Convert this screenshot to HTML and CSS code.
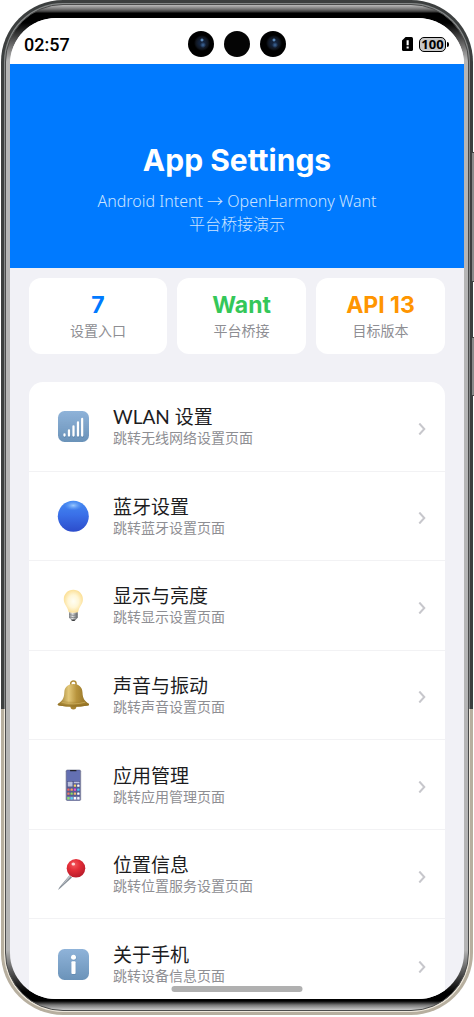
FILE: index.html
```html
<!DOCTYPE html>
<html lang="zh-CN">

<head>
	<meta charset="UTF-8">
	<meta name="viewport" content="width=device-width, initial-scale=1">
	<title>App Settings</title>
	<link rel="stylesheet" href="styles.css">
</head>

<body>
	<div class="phone">
		<span class="key key-volume"></span>
		<span class="key key-power"></span>
		<div class="rim">
			<div class="bezel">
				<div class="screen">
					<div class="statusbar">
						<span class="time">02:57</span>
						<div class="cameras">
							<span class="camera lens"></span>
							<span class="camera"></span>
							<span class="camera lens"></span>
						</div>
						<div class="indicators">
							<svg class="sim" viewBox="0 0 11 14" aria-hidden="true">
								<path d="M3.6 0H9.5Q11 0 11 1.500V12.500Q11 14 9.500 14H1.500Q0 14 0 12.500V3.600Z" />
								<path d="M4.600 3.200H6.700V8.300H4.600ZM4.600 9.500H6.700V11.400H4.600Z" fill="#fff" />
							</svg>
							<span class="battery">100</span>
						</div>
					</div>

					<header class="hero">
						<h1>App Settings</h1>
						<p>Android Intent → OpenHarmony Want<br>平台桥接演示</p>
					</header>

					<main>
						<section class="stats">
							<div class="stat">
								<strong class="blue">7</strong>
								<span>设置入口</span>
							</div>
							<div class="stat">
								<strong class="green">Want</strong>
								<span>平台桥接</span>
							</div>
							<div class="stat">
								<strong class="orange">API 13</strong>
								<span>目标版本</span>
							</div>
						</section>

						<nav class="menu">
							<a class="item" href="#wlan">
								<svg class="icon" viewBox="0 0 32 32" aria-hidden="true">
									<defs>
										<linearGradient id="tile" x1="0" y1="0" x2="0" y2="1">
											<stop offset="0" stop-color="#8fb3d9" />
											<stop offset="1" stop-color="#6b93b9" />
										</linearGradient>
									</defs>
									<rect x="1" y="1" width="31" height="31" rx="6.500" fill="url(#tile)" />
									<g stroke="#4f789f" stroke-width="2.600" stroke-linecap="round" opacity=".45" transform="translate(.3 .6)">
										<path d="M7.500 24.500V26M12 20.500V26M16.500 16.500V26M21 12.500V26M25.200 9V26" />
									</g>
									<g stroke="#fff" stroke-width="2.300" stroke-linecap="round">
										<path d="M7.500 24.500V25.600M12 20.500V25.600M16.500 16.500V25.600M21 12.500V25.600M25.200 9V25.600" />
									</g>
								</svg>
								<span class="text">
									<span class="name">WLAN 设置</span>
									<span class="desc">跳转无线网络设置页面</span>
								</span>
								<svg class="chevron" viewBox="0 0 8 12" aria-hidden="true"><path d="M1.300.5 6.300 6l-5 5.500" /></svg>
							</a>
							<a class="item" href="#bluetooth">
								<svg class="icon" viewBox="0 0 32 32" aria-hidden="true">
									<defs>
										<linearGradient id="ball" x1="0" y1="0" x2="0" y2="1">
											<stop offset="0" stop-color="#4489f2" />
											<stop offset=".45" stop-color="#3a70e8" />
											<stop offset="1" stop-color="#2c4ccb" />
										</linearGradient>
										<radialGradient id="shine">
											<stop offset="0" stop-color="#9ccaff" />
											<stop offset="1" stop-color="#60a0f8" stop-opacity="0" />
										</radialGradient>
									</defs>
									<circle cx="16.300" cy="16.300" r="15.500" fill="url(#ball)" />
									<ellipse cx="16.300" cy="5.500" rx="9" ry="5" fill="url(#shine)" />
								</svg>
								<span class="text">
									<span class="name">蓝牙设置</span>
									<span class="desc">跳转蓝牙设置页面</span>
								</span>
								<svg class="chevron" viewBox="0 0 8 12" aria-hidden="true"><path d="M1.300.5 6.300 6l-5 5.500" /></svg>
							</a>
							<a class="item" href="#display">
								<svg class="icon" viewBox="0 0 32 32" aria-hidden="true">
									<defs>
										<radialGradient id="glow" cx=".5" cy=".5" r=".55">
											<stop offset="0" stop-color="#fffef4" />
											<stop offset=".5" stop-color="#fff6d6" />
											<stop offset="1" stop-color="#fbdc8c" />
										</radialGradient>
										<linearGradient id="socket">
											<stop offset="0" stop-color="#85888a" />
											<stop offset=".4" stop-color="#e1e2e2" />
											<stop offset="1" stop-color="#5c5f61" />
										</linearGradient>
									</defs>
									<path d="M16.300.8C10.800.8 6.800 5 6.800 10.300c0 5 3.200 6.800 4.300 11 .4 1.700.7 2.400 1.500 2.400h7.500c.8 0 1.100-.7 1.500-2.400 1.100-4.200 4.300-6 4.300-11C25.900 5 21.800.8 16.300.8Z" fill="url(#glow)" />
									<path d="M12 23.200q4.400 1.500 8.700 0v5.600l-2.200 2.200q-.6 1-2.200 1t-2.100-1L12 28.800Z" fill="url(#socket)" />
									<path d="M12.200 25.700q4.200 1.300 8.300 0M12.200 28q4.200 1.300 8.300 0" fill="none" stroke="#707375" stroke-width=".7" />
									<path d="M14 30.400h4.600q-.6 1.600-2.300 1.600T14 30.400Z" fill="#37393b" />
								</svg>
								<span class="text">
									<span class="name">显示与亮度</span>
									<span class="desc">跳转显示设置页面</span>
								</span>
								<svg class="chevron" viewBox="0 0 8 12" aria-hidden="true"><path d="M1.300.5 6.300 6l-5 5.500" /></svg>
							</a>
							<a class="item" href="#sound">
								<svg class="icon" viewBox="0 0 32 32" aria-hidden="true">
									<defs>
										<linearGradient id="brass">
											<stop offset="0" stop-color="#8e6f24" />
											<stop offset=".35" stop-color="#e3c879" />
											<stop offset=".6" stop-color="#b8943d" />
											<stop offset="1" stop-color="#8a6a20" />
										</linearGradient>
										<linearGradient id="lip" x1="0" y1="0" x2="0" y2="1">
											<stop offset="0" stop-color="#b18c35" stop-opacity="0" />
											<stop offset="1" stop-color="#8a691c" />
										</linearGradient>
									</defs>
									<circle cx="16.400" cy="4.600" r="2.700" fill="none" stroke="#b28e3b" stroke-width="1.500" />
									<circle cx="16.400" cy="27.500" r="3" fill="#a78330" />
									<path d="M16.400 5C11 5 7.500 8 7.300 13.500 7.100 20 4.500 22.500 1.400 24.500q-1.600 1.300.4 2 14.600 2.600 29.200 0 2-.7.400-2C28.300 22.500 25.700 20 25.500 13.500 25.300 8 21.800 5 16.400 5Z" fill="url(#brass)" />
									<path d="M5.500 21Q3.800 23 1.400 24.500q-1.600 1.300.4 2 14.600 2.600 29.200 0 2-.7.400-2Q29 23 27.300 21 16.400 24 5.500 21Z" fill="url(#lip)" />
									<path d="M4.500 23.200Q16.400 26.500 28.300 23.200" fill="none" stroke="#d3b768" stroke-width=".6" />
								</svg>
								<span class="text">
									<span class="name">声音与振动</span>
									<span class="desc">跳转声音设置页面</span>
								</span>
								<svg class="chevron" viewBox="0 0 8 12" aria-hidden="true"><path d="M1.300.5 6.300 6l-5 5.500" /></svg>
							</a>
							<a class="item" href="#apps">
								<svg class="icon" viewBox="0 0 32 32" aria-hidden="true">
									<rect x="8.600" y=".5" width="15.600" height="31.500" rx="1.800" fill="#a4a7b5" />
									<rect x="9.400" y="1.100" width="14" height="30.300" rx="1.200" fill="#555b92" />
									<rect x="9.800" y="1.500" width="13.200" height="10.500" fill="#6470b2" />
									<rect x="13" y="1" width="6.500" height="1.300" rx=".6" fill="#23252d" />
									<rect x="10.800" y="12.700" width="4.700" height="4.700" rx=".5" fill="#b9bfdc" />
									<rect x="16.800" y="12.700" width="5.700" height="1.600" rx=".4" fill="#bac0df" />
									<g>
										<rect x="16.800" y="15.500" width="2.300" height="2.300" rx=".6" fill="#f7d366" />
										<rect x="20.200" y="15.500" width="2.300" height="2.300" rx=".6" fill="#fff" />
										<rect x="10.300" y="19.500" width="2.300" height="2.300" rx=".6" fill="#f0655d" />
										<rect x="13.500" y="19.500" width="2.300" height="2.300" rx=".6" fill="#f2a164" />
										<rect x="16.800" y="19.500" width="2.300" height="2.300" rx=".6" fill="#ef4bd5" />
										<rect x="20.200" y="19.500" width="2.300" height="2.300" rx=".6" fill="#50c3f6" />
										<rect x="10.300" y="23.500" width="2.300" height="2.300" rx=".6" fill="#ed7966" />
										<rect x="13.500" y="23.500" width="2.300" height="2.300" rx=".6" fill="#8bd95f" />
										<rect x="16.800" y="23.500" width="2.300" height="2.300" rx=".6" fill="#f4b86f" />
										<rect x="20.200" y="23.500" width="2.300" height="2.300" rx=".6" fill="#fff" />
									</g>
									<rect x="9.800" y="27.400" width="13.200" height="3.800" rx=".6" fill="#8188b5" />
									<rect x="10.300" y="28.100" width="2.300" height="2.300" rx=".6" fill="#8be26b" />
									<rect x="13.500" y="28.100" width="2.300" height="2.300" rx=".6" fill="#5ad0f7" />
									<rect x="16.800" y="28.100" width="2.300" height="2.300" rx=".6" fill="#fff" />
									<rect x="20.200" y="28.100" width="2.300" height="2.300" rx=".6" fill="#f3f4fa" />
								</svg>
								<span class="text">
									<span class="name">应用管理</span>
									<span class="desc">跳转应用管理页面</span>
								</span>
								<svg class="chevron" viewBox="0 0 8 12" aria-hidden="true"><path d="M1.300.5 6.300 6l-5 5.500" /></svg>
							</a>
							<a class="item" href="#location">
								<svg class="icon" viewBox="0 0 32 32" aria-hidden="true">
									<defs>
										<radialGradient id="pin" cx=".4" cy=".3" r=".7">
											<stop offset="0" stop-color="#f4585d" />
											<stop offset=".45" stop-color="#e32d37" />
											<stop offset="1" stop-color="#b91c2b" />
										</radialGradient>
									</defs>
									<path d="M12.500 17.200 15 19.600 3.500 30 1 32 2.600 29Z" fill="#858d96" />
									<path d="M12.600 17.600 13.600 18.400 3 29.800Z" fill="#c6cbd0" />
									<circle cx="19" cy="10.300" r="9.300" fill="url(#pin)" />
									<ellipse cx="16.300" cy="6" rx="1.800" ry="1.500" fill="#ffd6d5" />
								</svg>
								<span class="text">
									<span class="name">位置信息</span>
									<span class="desc">跳转位置服务设置页面</span>
								</span>
								<svg class="chevron" viewBox="0 0 8 12" aria-hidden="true"><path d="M1.300.5 6.300 6l-5 5.500" /></svg>
							</a>
							<a class="item" href="#about">
								<svg class="icon" viewBox="0 0 32 32" aria-hidden="true">
									<rect x="1" y="1" width="31" height="31" rx="6.500" fill="url(#tile)" />
									<g fill="#4f789f" opacity=".45">
										<circle cx="16.800" cy="9.800" r="2.700" />
										<rect x="14.600" y="13.700" width="4.500" height="13" rx="1" />
									</g>
									<g fill="#fff">
										<circle cx="16.500" cy="9.300" r="2.500" />
										<rect x="14.400" y="13.200" width="4.200" height="12.800" rx="1" />
									</g>
								</svg>
								<span class="text">
									<span class="name">关于手机</span>
									<span class="desc">跳转设备信息页面</span>
								</span>
								<svg class="chevron" viewBox="0 0 8 12" aria-hidden="true"><path d="M1.300.5 6.300 6l-5 5.500" /></svg>
							</a>
						</nav>
					</main>
					<span class="home"></span>
				</div>
			</div>
		</div>
	</div>
</body>

</html>
```

FILE: styles.css
```css
* {
	box-sizing: border-box;
}

body {
	margin: 0;
	background: #fff;
	font-family: Lato, "Noto Sans CJK SC", sans-serif;
}

/* device */

.phone {
	position: relative;
	height: calc(100vh - 2px);
	margin: 0 1px;
	padding: 3px;
	border-radius: 62px;
	background: linear-gradient(#3c3f3f 709px, #b7af9f 709px);
}

.rim {
	height: 100%;
	padding: 1px;
	border-radius: 59px;
	background: linear-gradient(#858888 706px, #eee8dc 706px);
}

.bezel {
	height: 100%;
	padding: 13px 4px 11px;
	border: 1px solid #4a4b4b;
	border-radius: 58px;
	background: linear-gradient(#bbb 0, #777 4px, #333 7px, #000 8px, #000 18px, #b5b5b5 55px, #b5b5b5 calc(100% - 60px), #000 calc(100% - 18px), #000 calc(100% - 9px), #777 calc(100% - 5px), #ccc 100%);
}

.key {
	position: absolute;
	right: -1px;
	width: 2px;
	border: solid #444;
	border-width: 1px 0;
	background: #8a8a8a;
}

.key-volume {
	top: 152px;
	height: 130px;
}

.key-power {
	top: 337px;
	height: 59px;
}

.screen {
	position: relative;
	height: 100%;
	overflow: hidden;
	border-radius: 46px;
	background: #f1f1f6;
}

/* status bar */

.statusbar {
	display: grid;
	grid-template-columns: 1fr auto 1fr;
	align-items: center;
	height: 46px;
	padding: 6px 15px 0 14px;
	background: #fff;
}

.time {
	color: #000;
	font-family: Roboto, sans-serif;
	font-size: 18px;
	font-weight: 500;
}

.cameras {
	display: flex;
	gap: 10px;
}

.camera {
	width: 26px;
	height: 26px;
	border-radius: 50%;
	background: #050505;
}

.lens {
	background:
		radial-gradient(circle at 14px 9px, #7fc0ff 0, rgba(42, 98, 168, 0) 2px),
		radial-gradient(circle at 15px 14px, #3f6a9e 0, rgba(32, 60, 104, 0) 3px),
		radial-gradient(circle at 14px 12px, #14233c 3px, #11161f 6px, #000 8px);
}

.indicators {
	display: flex;
	justify-content: flex-end;
	align-items: center;
	gap: 6px;
}

.sim {
	width: 11px;
	height: 14px;
}

.battery {
	position: relative;
	width: 27px;
	height: 15px;
	margin-right: 3px;
	border: 1px solid #000;
	border-radius: 5px;
	background: #c9c9c9;
	color: #000;
	font-family: "Noto Sans", sans-serif;
	font-size: 13px;
	font-weight: 700;
	line-height: 13px;
	text-align: center;
}

.battery::after {
	content: "";
	position: absolute;
	top: 4px;
	right: -4px;
	width: 2px;
	height: 5px;
	border-radius: 0 2px 2px 0;
	background: #000;
}

/* header */

.hero {
	padding: 78px 20px 32px;
	background: #007aff;
	color: #fff;
	text-align: center;
}

.hero h1 {
	margin: 0 0 12px;
	font-family: Inter, sans-serif;
	font-size: 30px;
	font-weight: 700;
	line-height: 36px;
}

.hero p {
	margin: 0;
	color: #cce4ff;
	font-family: "Noto Sans", "Noto Sans CJK SC", sans-serif;
	font-size: 16px;
	font-weight: 300;
	line-height: 23px;
}

main {
	padding: 10px 19px;
}

.stats {
	display: grid;
	grid-template-columns: 15fr 14fr 14fr;
	gap: 10px;
	margin-bottom: 28px;
}

.stat {
	display: flex;
	flex-direction: column;
	align-items: center;
	padding: 12px 4px;
	border-radius: 12px;
	background: #fff;
	color: #8e8e93;
	font-size: 14px;
	line-height: 22px;
}

.stat strong {
	font-family: Inter, sans-serif;
	font-size: 23px;
	line-height: 30px;
}

.blue {
	color: #007aff;
}

.green {
	color: #34c759;
}

.orange {
	color: #ff9500;
}

/* settings list */

.menu {
	display: grid;
	grid-auto-rows: 1fr;
	min-height: 627px;
	overflow: hidden;
	border-radius: 14px;
	background: #fff;
}

.item {
	display: flex;
	align-items: center;
	gap: 24px;
	padding: 0 19px 0 28px;
	border-bottom: 1px solid #f2f2f4;
	color: #1c1c1e;
	text-decoration: none;
}

.item:last-child {
	border-bottom: 0;
}

.icon {
	flex: none;
	width: 32px;
	height: 32px;
}

.text {
	flex: 1;
	display: flex;
	flex-direction: column;
}

.name {
	font-size: 19px;
	line-height: 24px;
}

.desc {
	color: #8e8e93;
	font-size: 14px;
	line-height: 18px;
}

.chevron {
	width: 8px;
	height: 12px;
	margin-top: 5px;
	fill: none;
	stroke: #c7c7cc;
	stroke-width: 2;
}

.home {
	position: absolute;
	bottom: 7px;
	left: 50%;
	width: 131px;
	height: 6px;
	border-radius: 3px;
	background: #b0b0b0;
	transform: translateX(-50%);
}
```
